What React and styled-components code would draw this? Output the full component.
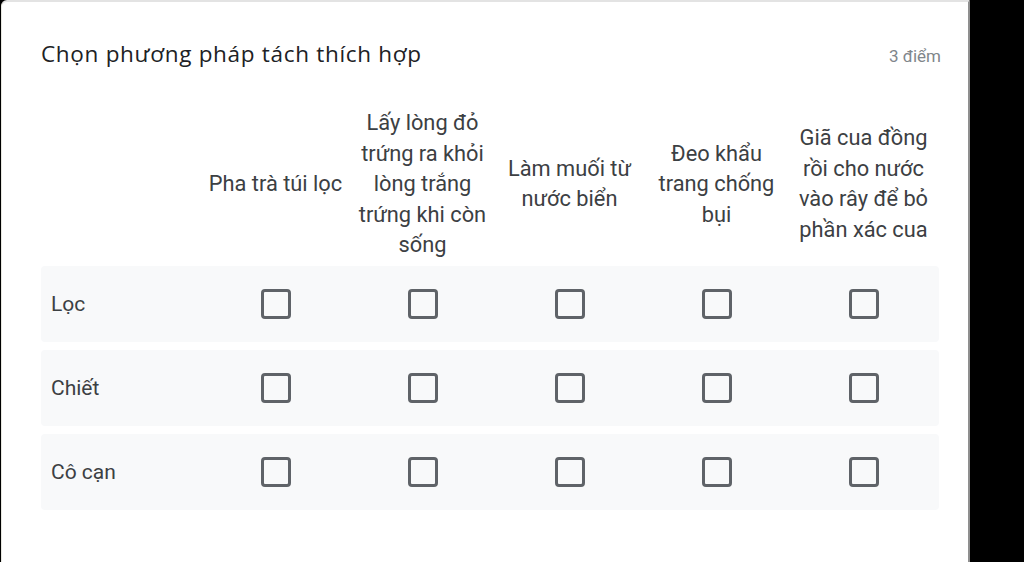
import React from "react";
import styled, { createGlobalStyle } from "styled-components";

const GlobalStyle = createGlobalStyle`
  html, body {
    margin: 0;
    padding: 0;
    background: #000;
    height: 100%;
    overflow: hidden;
  }
  #root {
    height: 100%;
  }
`;

const Page = styled.div`
  display: flex;
  height: 562px;
  padding-left: 1px;
  background: #000;
`;

const Card = styled.div`
  width: 969px;
  background: #fff;
  border-top: 2px solid #e3e3e3;
  border-left: 1px solid #e8e8e0;
  border-right: 2px solid #8f8f8f;
  border-top-left-radius: 6px;
  box-sizing: border-box;
  padding: 26px 28px 0 39px;
`;

const Header = styled.div`
  display: flex;
  justify-content: space-between;
  align-items: baseline;
  width: 900px;
`;

const Title = styled.div`
  font-family: "Open Sans", Roboto, sans-serif;
  font-size: 22.5px;
  line-height: 52px;
  color: #202124;
  letter-spacing: 0.7px;
`;

const Points = styled.div`
  font-family: Roboto, "Noto Sans", sans-serif;
  font-size: 17px;
  color: #80868b;
`;

const Grid = styled.div`
  margin-top: 24px;
  width: 898px;
  display: flex;
  flex-direction: column;
  gap: 8px;
`;

const Row = styled.div`
  display: grid;
  grid-template-columns: 161px repeat(5, 147px);
  align-items: center;
  height: ${(p) => (p.$head ? "154px" : "76px")};
  padding-top: ${(p) => (p.$head ? "4px" : "0")};
  box-sizing: border-box;
  background: ${(p) => (p.$head ? "transparent" : "#f8f9fa")};
  border-radius: 4px;
`;

const ColHead = styled.div`
  font-family: Roboto, "Noto Sans", sans-serif;
  font-size: 21.8px;
  line-height: 30.5px;
  color: #3c4043;
  text-align: center;
  padding: 0 5px;
`;

const RowLabel = styled.div`
  font-family: Roboto, "Noto Sans", sans-serif;
  font-size: 21px;
  color: #3c4043;
  padding-left: 10px;
`;

const Cell = styled.div`
  display: flex;
  justify-content: center;
  align-items: center;
`;

const Box = styled.div`
  width: 30px;
  height: 30px;
  box-sizing: border-box;
  border: 3px solid #5f6368;
  border-radius: 4px;
`;

const columns = [
  "Pha trà túi lọc",
  "Lấy lòng đỏ trứng ra khỏi lòng trắng trứng khi còn sống",
  "Làm muối từ nước biển",
  "Đeo khẩu trang chống bụi",
  "Giã cua đồng rồi cho nước vào rây để bỏ phần xác cua",
];

const rows = ["Lọc", "Chiết", "Cô cạn"];

export default function App() {
  return (
    <>
      <GlobalStyle />
      <Page>
        <Card>
          <Header>
            <Title>Chọn phương pháp tách thích hợp</Title>
            <Points>3 điểm</Points>
          </Header>
          <Grid>
            <Row $head>
              <div />
              {columns.map((c) => (
                <ColHead key={c}>{c}</ColHead>
              ))}
            </Row>
            {rows.map((r) => (
              <Row key={r}>
                <RowLabel>{r}</RowLabel>
                {columns.map((c) => (
                  <Cell key={c}>
                    <Box />
                  </Cell>
                ))}
              </Row>
            ))}
          </Grid>
        </Card>
      </Page>
    </>
  );
}
